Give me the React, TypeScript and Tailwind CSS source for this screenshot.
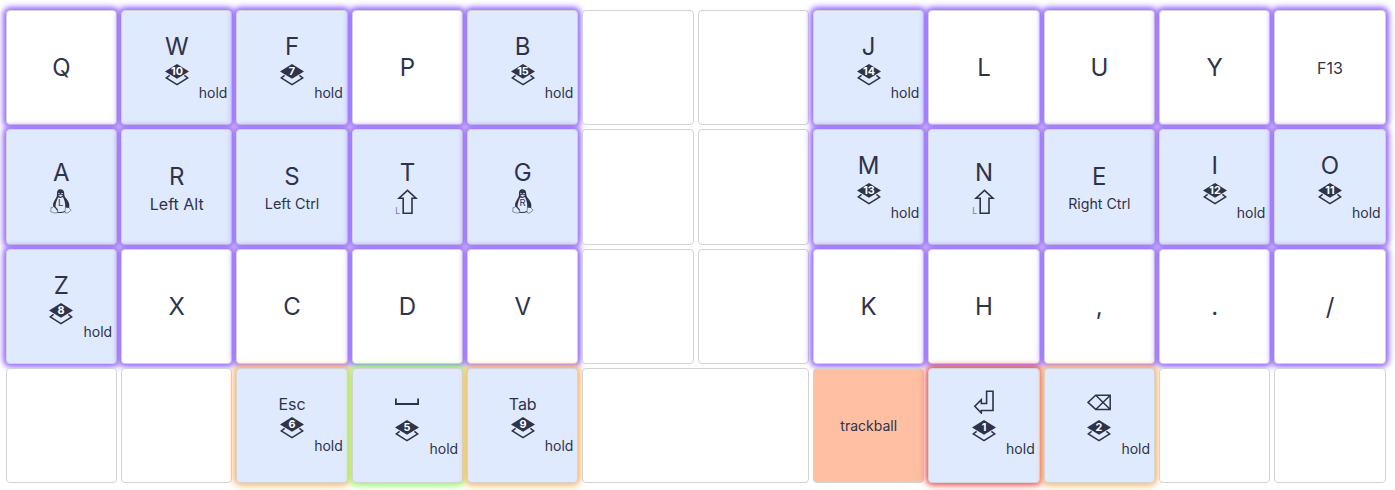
import type { ReactNode } from "react";

const svgText = "font-['Inter',sans-serif]";

function Layer({ n }: { n: number }) {
  return (
    <svg width="24" height="22" viewBox="0 0 24 22" className="block shrink-0">
      <path d="M4.6 11.4 1.3 14 12 20.6 22.7 14 19.4 11.4" fill="none" stroke="#2f3349" strokeWidth="1.5" />
      <path d="M12 0 24 7.4 12 14.8 0 7.4Z" fill="#2f3349" />
      <text x="12" y="11.2" textAnchor="middle" fontSize="10.8" fontWeight="700" fill="#fff" className={svgText}>
        {n}
      </text>
    </svg>
  );
}

function Tux({ side }: { side: string }) {
  return (
    <svg width="22" height="25" viewBox="0 0 22 25" className="block shrink-0" fill="none" stroke="#2f3349">
      <path
        d="M10.5 0.2C7.6 0.2 6.8 2.3 7 5C7.1 8 5.8 9.4 4.4 11.7C3.1 14 2.8 15.5 3.2 17.4L5.6 18.8C5.1 14.8 6.8 11 8.2 8.4L10.5 9L12.9 8C14.3 11 15.6 14 15.2 18.3L19 18.9C20.6 14.5 17.2 10.5 15.2 8.2C14.1 6.6 14.4 5 14 3C13.6 1.2 12.4 0.2 10.5 0.2Z"
        fill="#2f3349"
        stroke="none"
      />
      <path d="M8.2 4.6Q8.8 3.6 9.5 4.9M11.2 4.9Q12 3.6 12.8 4.8" stroke="#e0eaff" strokeWidth="1" />
      <path d="M8.1 6.4 10.5 5.5 13.1 6.5 10.6 8Z" fill="#cbd5ee" stroke="none" />
      <path d="M3.6 17.3 7.2 21.3 7.4 23.8 4.3 24 0.6 22.7 1 20.5 0.8 18.8 3 18.2Z" strokeWidth="0.5" />
      <path d="M15.5 18 15 22.8 15.8 24.2 18 23.8 21.2 21.2 19.6 19.7 19 18.4Z" strokeWidth="0.5" />
      <path d="M5.2 18 8 21.5M7.4 23Q11 24.3 15 22.6" strokeWidth="1.1" />
      <text x="10.6" y="17.4" textAnchor="middle" fontSize="9.5" fill="#2f3349" stroke="none" className={svgText}>
        {side}
      </text>
    </svg>
  );
}

function Shift() {
  return (
    <svg width="24" height="26" viewBox="0 0 24 26" className="block shrink-0">
      <path d="M12.5 1.3 21 9.2H17V24.2H8.2V9.2H4Z" fill="none" stroke="#2f3349" strokeWidth="1.6" />
      <text x="0.3" y="24.5" fontSize="8.5" fill="#747b91" className={svgText}>
        L
      </text>
    </svg>
  );
}

function Space() {
  return (
    <svg width="24" height="24" viewBox="0 0 24 24" className="block">
      <path d="M0.9 8.6V14H23.1V8.6" fill="none" stroke="#2f3349" strokeWidth="1.8" />
    </svg>
  );
}

function Enter() {
  return (
    <svg width="24" height="24" viewBox="0 0 24 24" className="block">
      <path d="M14.6 1.2H21V20.5H9.3V23L2.8 16.3 9.3 9.6V13.5H14.6Z" fill="none" stroke="#2f3349" strokeWidth="1.6" />
    </svg>
  );
}

function Backspace() {
  return (
    <svg width="24" height="24" viewBox="0 0 24 24" className="block">
      <path d="M8.7 5.3H23.2V19.4H8.7L1 12.4ZM9 5.5 23 19.2M23 5.5 9 19.2" fill="none" stroke="#2f3349" strokeWidth="1.5" />
    </svg>
  );
}

type Glow = "purple" | "orange" | "green" | "red";

const glows: Record<Glow, string> = {
  purple: "shadow-[0_0_5px_2px_#9d75ff,0_0_9px_1px_#9d75ff]",
  orange: "shadow-[0_0_5px_1px_#ffb870,0_0_8px_1px_#ffb870]",
  green: "shadow-[0_0_5px_1px_#96fb6a,0_0_8px_1px_#96fb6a]",
  red: "shadow-[0_0_5px_1px_#ec6262,0_0_8px_1px_#ec6262]",
};

interface KeyProps {
  glow?: Glow;
  tone?: "white" | "blue" | "peach";
  className?: string;
  children?: ReactNode;
}

function Key({ glow, tone = "white", className = "", children }: KeyProps) {
  const bg = tone === "blue" ? "bg-[#e0eaff]" : tone === "peach" ? "bg-[#ffbfa3]" : "bg-white";
  return (
    <div
      className={`flex flex-col items-center rounded-[4px] border border-[#d3d3d3] ${bg} ${glow ? glows[glow] : ""} ${className}`}
    >
      {children}
    </div>
  );
}

function Plain({ label, size = "text-[24px]" }: { label: string; size?: string }) {
  return (
    <Key glow="purple" className="justify-center pt-[2px]">
      <span className={`leading-[28px] ${size}`}>{label}</span>
    </Key>
  );
}

function Hold() {
  return <span className="-mt-[1.5px] self-end pr-[4px] text-[14px] leading-[18px]">hold</span>;
}

function LetterLayer({ label, n }: { label: string; n: number }) {
  return (
    <Key glow="purple" tone="blue" className="pt-[21.2px]">
      <span className="text-[24px] leading-[29px]">{label}</span>
      <div className="mt-[3px]">
        <Layer n={n} />
      </div>
      <Hold />
    </Key>
  );
}

function LetterText({ label, text, size }: { label: string; text: string; size: string }) {
  return (
    <Key glow="purple" tone="blue" className="pt-[31.5px]">
      <span className="text-[24px] leading-[29px]">{label}</span>
      <span className={`mt-[2px] leading-[22px] ${size}`}>{text}</span>
    </Key>
  );
}

function LetterIcon({ label, children }: { label: string; children: ReactNode }) {
  return (
    <Key glow="purple" tone="blue" className="pt-[28.2px]">
      <span className="text-[24px] leading-[29px]">{label}</span>
      <div className="mt-[2px]">{children}</div>
    </Key>
  );
}

function WordThumb({ label, n }: { label: string; n: number }) {
  return (
    <Key glow="orange" tone="blue" className="pt-[24.5px]">
      <span className="text-[16px] leading-[22px]">{label}</span>
      <div className="mt-[1.5px]">
        <Layer n={n} />
      </div>
      <Hold />
    </Key>
  );
}

function IconThumb({ glow, n, children }: { glow: Glow; n: number; children: ReactNode }) {
  return (
    <Key glow={glow} tone="blue" className="pt-[21px]">
      {children}
      <div className="mt-[6px]">
        <Layer n={n} />
      </div>
      <Hold />
    </Key>
  );
}

export default function App() {
  return (
    <main className="h-[490px] w-[1395px] overflow-hidden bg-white pt-[9.8px] pl-[5.7px] font-['Inter',sans-serif] text-[#2f3349]">
      <div className="grid w-[1380px] auto-rows-[115.4px] grid-cols-12 gap-x-[3.9px] gap-y-[4px]">
        <Plain label="Q" />
        <LetterLayer label="W" n={10} />
        <LetterLayer label="F" n={7} />
        <Plain label="P" />
        <LetterLayer label="B" n={15} />
        <Key />
        <Key />
        <LetterLayer label="J" n={14} />
        <Plain label="L" />
        <Plain label="U" />
        <Plain label="Y" />
        <Plain label="F13" size="text-[16px]" />

        <LetterIcon label="A">
          <Tux side="L" />
        </LetterIcon>
        <LetterText label="R" text="Left Alt" size="text-[16px]" />
        <LetterText label="S" text="Left Ctrl" size="text-[14.4px]" />
        <LetterIcon label="T">
          <Shift />
        </LetterIcon>
        <LetterIcon label="G">
          <Tux side="R" />
        </LetterIcon>
        <Key />
        <Key />
        <LetterLayer label="M" n={13} />
        <LetterIcon label="N">
          <Shift />
        </LetterIcon>
        <LetterText label="E" text="Right Ctrl" size="text-[14.2px]" />
        <LetterLayer label="I" n={12} />
        <LetterLayer label="O" n={11} />

        <LetterLayer label="Z" n={8} />
        <Plain label="X" />
        <Plain label="C" />
        <Plain label="D" />
        <Plain label="V" />
        <Key />
        <Key />
        <Plain label="K" />
        <Plain label="H" />
        <Plain label="," />
        <Plain label="." />
        <Plain label="/" />

        <Key />
        <Key />
        <WordThumb label="Esc" n={6} />
        <IconThumb glow="green" n={5}>
          <Space />
        </IconThumb>
        <WordThumb label="Tab" n={9} />
        <Key className="col-span-2" />
        <Key tone="peach" className="justify-center">
          <span className="text-[14px] leading-[20px]">trackball</span>
        </Key>
        <IconThumb glow="red" n={1}>
          <Enter />
        </IconThumb>
        <IconThumb glow="orange" n={2}>
          <Backspace />
        </IconThumb>
        <Key />
        <Key />
      </div>
    </main>
  );
}
